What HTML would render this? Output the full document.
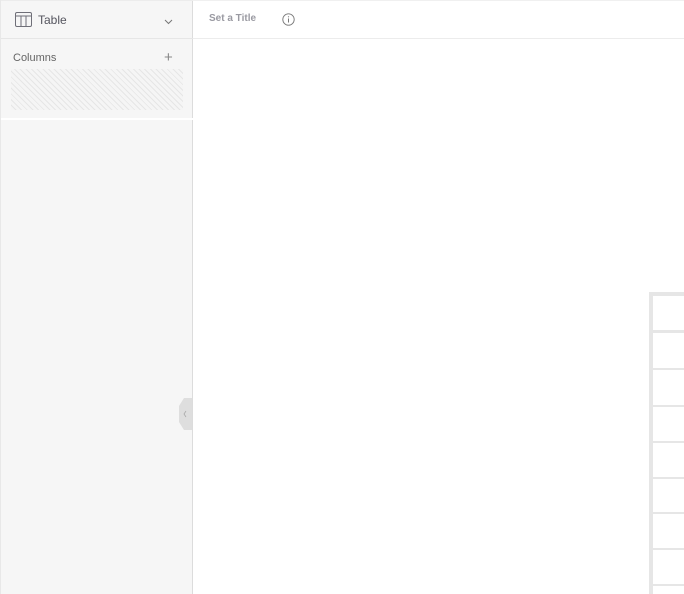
<!DOCTYPE html>
<html><head><style>
body{margin:0;width:684px;height:594px;overflow:hidden;background:#fff;font-family:"Liberation Sans",sans-serif;position:relative}
.sb{position:absolute;left:0;top:0;width:193px;height:594px;background:#f6f6f6;border-right:1px solid #dcdcdc;border-left:1px solid #e8e8e8;box-sizing:border-box}
.hd{position:absolute;left:0;top:0;width:192px;height:39px;border-bottom:1px solid #e6e6e6;border-top:1px solid #ececec;box-sizing:border-box}
.line{position:absolute;background:#e6e6e6}
</style></head><body>
<div class="sb">
 <div class="hd">
  <svg style="position:absolute;left:14px;top:11px" width="17" height="15" viewBox="0 0 17 15"><rect x="0.5" y="0.5" width="16" height="14" rx="1.5" fill="none" stroke="#6f6f78"/><line x1="0.5" y1="4" x2="16.5" y2="4" stroke="#6f6f78"/><line x1="6" y1="4" x2="6" y2="14.5" stroke="#6f6f78"/><line x1="11" y1="4" x2="11" y2="14.5" stroke="#6f6f78"/></svg>
  <span style="position:absolute;left:37px;top:12px;font-size:12px;color:#55555e">Table</span>
  <svg style="position:absolute;left:163px;top:18px" width="9" height="6" viewBox="0 0 9 6"><path d="M1 1l3.5 3.5L8 1" fill="none" stroke="#777" stroke-width="1"/></svg>
 </div>
 <span style="position:absolute;left:12px;top:52px;font-size:11px;color:#666">Columns</span>
 <span style="position:absolute;left:163px;top:49px;font-size:15px;color:#888">+</span>
 <div style="position:absolute;left:10px;top:69px;width:172px;height:41px;background:repeating-linear-gradient(45deg,#f5f5f5 0 3px,#e6e6e6 3px 4px)"></div>
 <div style="position:absolute;left:0;top:118px;width:192px;height:2px;background:#fff"></div>
</div>
<svg style="position:absolute;left:179px;top:398px" width="13" height="32" viewBox="0 0 13 32"><path d="M13 0L5 0L0 8L0 24L5 32L13 32Z" fill="#dedede"/><path d="M7 13l-2 3 2 3" fill="none" stroke="#aaa" stroke-width="0.8"/></svg>
<div style="position:absolute;left:193px;top:0;width:491px;height:39px;border-bottom:1px solid #ececec;border-top:1px solid #f0f0f0;box-sizing:border-box"></div>
<span style="position:absolute;left:209px;top:13px;font-size:10px;font-weight:bold;color:#9a9aa2">Set a Title</span>
<svg style="position:absolute;left:282px;top:13px" width="13" height="13" viewBox="0 0 13 13"><circle cx="6.5" cy="6.5" r="5.7" fill="none" stroke="#777" stroke-width="0.9"/><line x1="6.5" y1="5.5" x2="6.5" y2="9.5" stroke="#777"/><circle cx="6.5" cy="3.8" r="0.6" fill="#777"/></svg>
<div class="line" style="left:649px;top:292px;width:4px;height:302px"></div>
<div class="line" style="left:649px;top:292px;width:35px;height:4px"></div>
<div class="line" style="left:653px;top:330px;width:31px;height:3px"></div>
<div class="line" style="left:653px;top:368px;width:31px;height:2px"></div>
<div class="line" style="left:653px;top:405px;width:31px;height:2px"></div>
<div class="line" style="left:653px;top:441px;width:31px;height:2px"></div>
<div class="line" style="left:653px;top:477px;width:31px;height:2px"></div>
<div class="line" style="left:653px;top:512px;width:31px;height:2px"></div>
<div class="line" style="left:653px;top:548px;width:31px;height:2px"></div>
<div class="line" style="left:653px;top:584px;width:31px;height:2px"></div>
</body></html>
